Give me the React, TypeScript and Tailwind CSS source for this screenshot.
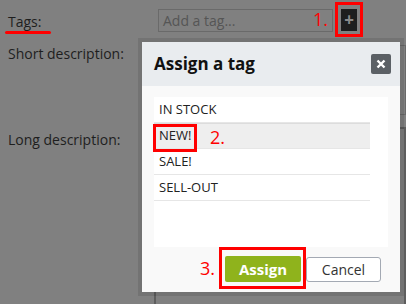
import React from "react";

const tags = ["IN STOCK", "NEW!", "SALE!", "SELL-OUT"];

const App = () => {
  return (
    <div className="relative w-[406px] h-[304px] overflow-hidden bg-[#808080] font-['Open_Sans',sans-serif] text-[#1e1e1e]">
      {/* form behind the overlay */}
      <div className="flex flex-col pl-[8px] pt-[9px]">
        <div className="flex items-start">
          <div className="relative w-[150px] pt-[4px] text-[14px] leading-[18px]">
            Tags:
            <span className="absolute left-[-3px] top-[22px] h-[3px] w-[46px] rounded-full bg-[#ff0000]" />
          </div>
          <div className="flex h-[23px] w-[175px] items-center border border-[#6a6a6a] pl-[4px] text-[14px] text-[#555]">
            Add a tag...
          </div>
          <div className="relative ml-[8px] h-[22px] w-[16px] bg-[#1e1e1e] text-center text-[17px] font-bold leading-[21px] text-[#8a8a8a]">
            +
            <span className="absolute left-[-28px] top-[-1px] text-[18px] font-normal leading-[22px] text-[#ff0000]">1.</span>
            <span className="absolute left-[-6px] top-[-7px] h-[35px] w-[28px] border-[3px] border-[#ff0000]" />
          </div>
        </div>
        <div className="flex items-start pt-[13px]">
          <div className="w-[150px] text-[14px] leading-[18px]">Short description:</div>
          <div className="h-[70px] flex-1 border border-[#6a6a6a]" />
        </div>
        <div className="flex items-start pt-[12px]">
          <div className="w-[150px] text-[14px] leading-[18px] pt-[4px]">Long description:</div>
          <div className="h-[180px] w-[260px] border-2 border-[#5e5e5e]" />
        </div>
      </div>

      {/* modal */}
      <div className="absolute left-[142px] top-[42px] flex h-[250px] w-[258px] flex-col bg-[#f9f9f9] shadow-[0_0_0_4px_rgba(0,0,0,0.1)]">
        <div className="flex h-[44px] items-center justify-between bg-[#e9ecef] pl-[12px] pr-[9px]">
          <h2 className="text-[17px] font-bold text-[#111]">Assign a tag</h2>
          <button className="flex h-[20px] w-[20px] items-center justify-center rounded-[2px] bg-[#5b6065] text-white">
            <svg width="10" height="10" viewBox="0 0 10 10">
              <path d="M1.5 1.5L8.5 8.5M8.5 1.5L1.5 8.5" stroke="white" strokeWidth="2.4" />
            </svg>
          </button>
        </div>
        <div className="px-[12px] pt-[11px]">
          <div className="h-[150px] bg-white">
            {tags.map((t, i) => (
              <div
                key={t}
                className={
                  "relative flex h-[26px] w-[216px] items-center border-b border-[#e6e6e6] pl-[5px] text-[13px] text-[#222] " +
                  (i === 1 ? "bg-[#eeeeee] border-t border-t-[#dcdcdc]" : "") +
                  (i === 0 ? " h-[24px]" : "")
                }
              >
                {t}
                {i === 1 && (
                  <>
                    <span className="absolute left-[-1px] top-0 h-[28px] w-[44px] border-[3px] border-[#ff0000]" />
                    <span className="absolute left-[56px] top-[1px] text-[18px] leading-[24px] text-[#ff0000]">2.</span>
                  </>
                )}
              </div>
            ))}
          </div>
        </div>
        <div className="flex items-center justify-end gap-[5px] pr-[19px] pt-[9px]">
          <div className="relative">
            <span className="absolute left-[-25px] top-[-2px] text-[18px] leading-[28px] text-[#ff0000]">3.</span>
            <span className="absolute left-[-6px] top-[-9px] h-[42px] w-[87px] border-[3px] border-[#ff0000]" />
            <button className="relative h-[26px] w-[76px] rounded-[2px] bg-[#8fb31c] text-[15px] font-bold text-white">
              Assign
            </button>
          </div>
          <button className="h-[25px] w-[75px] rounded-[3px] border border-[#a3a9b3] bg-white text-[14px] text-[#333]">
            Cancel
          </button>
        </div>
      </div>
    </div>
  );
};

export default App;
